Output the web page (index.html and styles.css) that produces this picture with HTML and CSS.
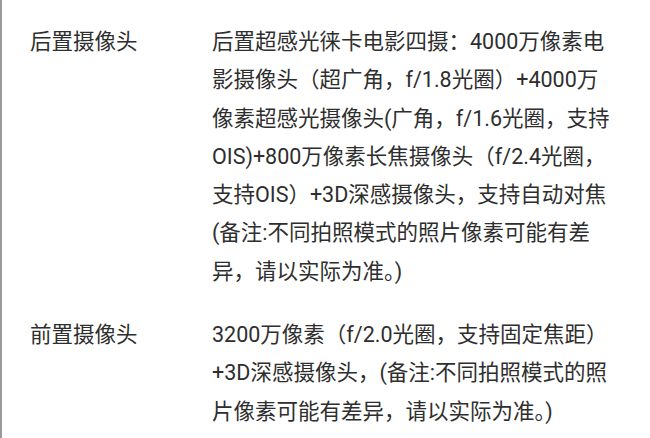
FILE: index.html
```html
<!DOCTYPE html>
<html lang="zh-CN">
<head>
<meta charset="utf-8">
<title>相机参数</title>
<link rel="stylesheet" href="styles.css">
</head>
<body>
<div class="sheet">
  <div class="row">
    <div class="label">后置摄像头</div>
    <div class="value">
      <span class="ln">后置超感光徕卡电影四摄：4000万像素电</span>
      <span class="ln">影摄像头（超广角，f/1.8光圈）+4000万</span>
      <span class="ln">像素超感光摄像头(广角，f/1.6光圈，支持</span>
      <span class="ln">OIS)+800万像素长焦摄像头（f/2.4光圈，</span>
      <span class="ln">支持OIS）+3D深感摄像头，支持自动对焦</span>
      <span class="ln">(备注:不同拍照模式的照片像素可能有差</span>
      <span class="ln">异，请以实际为准。)</span>
    </div>
  </div>
  <div class="row">
    <div class="label">前置摄像头</div>
    <div class="value">
      <span class="ln">3200万像素（f/2.0光圈，支持固定焦距）</span>
      <span class="ln">+3D深感摄像头，(备注:不同拍照模式的照</span>
      <span class="ln">片像素可能有差异，请以实际为准。)</span>
    </div>
  </div>
</div>
</body>
</html>
```

FILE: styles.css
```css
html, body {
  margin: 0;
  padding: 0;
  background: #ffffff;
}
body {
  width: 650px;
  height: 438px;
  overflow: hidden;
}
.sheet {
  box-sizing: border-box;
  height: 438px;
  border-left: 2px solid #9a9a9a;
  padding: 23px 0 0 28px;
  display: flex;
  flex-direction: column;
  gap: 25px;
  font-family: "Roboto", "Noto Sans CJK SC", sans-serif;
  font-size: 21.5px;
  line-height: 38.3px;
  color: #2e2e2e;
}
.row {
  display: flex;
}
.label {
  width: 182px;
  flex: none;
}
.value {
  display: flex;
  flex-direction: column;
}
.ln {
  display: block;
  white-space: nowrap;
}
```
